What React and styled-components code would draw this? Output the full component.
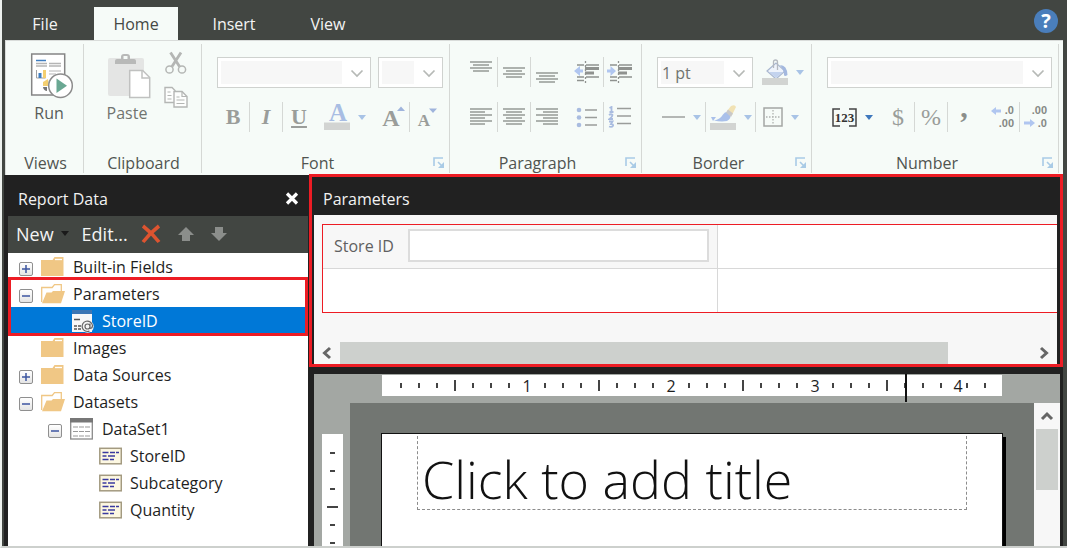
import React from "react";
import styled, { createGlobalStyle } from "styled-components";

const GlobalStyle = createGlobalStyle`
  *, *::before, *::after { box-sizing: border-box; }
  body {
    margin: 0;
    font-family: "Open Sans", "Noto Sans", sans-serif;
    font-size: 16px;
    line-height: 20px;
    color: #1e1e1e;
  }
  button, input, select { font: inherit; color: inherit; margin: 0; }
  ul { list-style: none; margin: 0; padding: 0; }
  h2, h1 { margin: 0; font-weight: 400; }
`;

const RED = "#ed1c24";
const LINE = "#d5d8d5";
const INK = "#9a9d9a";
const BLUE = "#a8bde3";

/* ---------- window frame ---------- */

const Frame = styled.div`
  min-height: 100vh;
  display: flex;
  flex-direction: column;
  background: #424642;
  border-left: 2px solid #eef2ef;
  border-bottom: 2px solid #cdd0cd;
`;

const TabBar = styled.nav`
  display: flex;
  height: 40px;
  padding: 7px 9px 0 0;
`;

const Tab = styled.button`
  width: ${(p) => p.$width}px;
  margin-left: ${(p) => (p.$active ? 6 : 0)}px;
  padding: 0;
  border: 0;
  background: ${(p) => (p.$active ? "#f6fbf8" : "transparent")};
  color: ${(p) => (p.$active ? "#444844" : "#f4f4f4")};
`;

const HelpButton = styled.button`
  width: 24px;
  height: 24px;
  margin: 2px 0 0 auto;
  padding: 0;
  border: 0;
  border-radius: 50%;
  background: #4a7ebb;
  color: #fff;
  font-size: 20px;
  font-weight: 700;
  line-height: 24px;
`;

const Ribbon = styled.div`
  display: flex;
  height: 135px;
  margin: 0 4px 0 3px;
  padding: 3px 4px 2px 0;
  background: #f6fbf8;
  border-top: 1px solid #d9dcda;
  border-left: 1px solid #d9dcda;
`;

const GroupBox = styled.section`
  display: flex;
  flex-direction: column;
  flex: ${(p) => (p.$grow ? "1 1 0" : "0 0 auto")};
  width: ${(p) => p.$width}px;
  min-width: 0;
  padding: 13px 6px 0 15px;
  border-right: 1px solid ${LINE};
`;

const GroupFooter = styled.div`
  display: flex;
  align-items: center;
  height: 20px;
  margin: auto ${(p) => (p.$launcher ? -2 : -8)}px 0 -15px;
`;

const GroupName = styled.h2`
  flex: 1;
  font-size: 16px;
  line-height: 20px;
  text-align: center;
  color: #505450;
`;

const ComboRow = styled.div`
  display: flex;
  gap: 7px;
  height: 30px;
`;

const ToolRow = styled.div`
  display: flex;
  height: 30px;
  margin-top: ${(p) => (p.$first ? 0 : 15)}px;
`;

const Tool = styled.button`
  display: flex;
  align-items: center;
  justify-content: center;
  gap: 8px;
  flex: none;
  width: ${(p) => p.$width || 33}px;
  height: 30px;
  padding: 0;
  border: 0;
  border-right: 1px solid ${(p) => (p.$divided ? LINE : "transparent")};
  margin-left: ${(p) => p.$before || 0}px;
  background: none;
  font-family: "Liberation Serif", serif;
  font-size: ${(p) => p.$size || 24}px;
  line-height: 30px;
  font-weight: ${(p) => (p.$plain ? 400 : 700)};
  font-style: ${(p) => (p.$italic ? "italic" : "normal")};
  text-decoration: ${(p) => (p.$underline ? "underline" : "none")};
  color: ${INK};
`;

const Glyph = styled.svg`
  display: block;
  flex: none;
`;

const BigTool = styled.button`
  display: flex;
  flex-direction: column;
  align-items: center;
  gap: 4px;
  width: 56px;
  margin-top: -4px;
  padding: 0;
  border: 0;
  background: none;
  color: ${(p) => (p.$dim ? "#707470" : "#585c58")};
`;

const ClipboardTools = styled.div`
  display: flex;
  gap: 9px;
`;

const SmallStack = styled.div`
  display: flex;
  flex-direction: column;
  gap: 11px;
  margin-top: -6px;
`;

const Launcher = styled.button`
  padding: 0;
  border: 0;
  background: none;
`;

const ComboShell = styled.div`
  position: relative;
  flex: ${(p) => (p.$width ? "0 0 auto" : "1 1 0")};
  width: ${(p) => p.$width}px;
  height: 31px;
  padding: 3px 28px 3px 3px;
  border: 1px solid #cfd2cf;
  background: #fff;
`;

const ComboSelect = styled.select`
  display: block;
  width: 100%;
  height: 100%;
  padding: 0 1px;
  border: 0;
  appearance: none;
  background: #f7f7f7;
  color: #707470;
  opacity: 1;
`;

const ComboArrow = styled.svg`
  position: absolute;
  right: 6px;
  top: 11px;
  pointer-events: none;
`;

/* ---------- workspace ---------- */

const Workspace = styled.div`
  flex: 1;
  display: flex;
  margin: 0 4px 0 2px;
  padding: 0 0 0 4px;
  background: #212121;
`;

const SidePanel = styled.aside`
  display: flex;
  flex-direction: column;
  flex: 0 0 300px;
`;

const PanelHeader = styled.header`
  display: flex;
  align-items: center;
  justify-content: space-between;
  height: 41px;
  padding: 6px 9px 0 10px;
  color: #f2f2f2;
`;

const PanelTitle = styled.h2`
  font-size: 16px;
  line-height: 20px;
`;

const IconButton = styled.button`
  display: block;
  padding: 0;
  border: 0;
  background: none;
`;

const PanelToolbar = styled.div`
  display: flex;
  align-items: center;
  height: 37px;
  padding: 0 8px 2px;
  background: #424642;
  color: #f4f4f4;
`;

const TextButton = styled.button`
  display: flex;
  align-items: center;
  gap: 7px;
  margin-right: 13px;
  padding: 0;
  border: 0;
  background: none;
  font-size: 18px;
  line-height: 24px;
`;

const ToolbarIcons = styled.div`
  display: flex;
  align-items: center;
  gap: 17px;
`;

const Tree = styled.ul`
  flex: 1;
  background: #fff;
`;

const TreeRow = styled.li`
  display: flex;
  align-items: center;
  gap: 8px;
  height: 27px;
  padding-left: ${(p) => 11 + p.$level * 29}px;
  background: ${(p) => (p.$selected ? "#0078d7" : "transparent")};
  color: ${(p) => (p.$selected ? "#fff" : "#1e1e1e")};
`;

const Expander = styled.button`
  flex: none;
  width: 14px;
  height: 14px;
  margin-top: 4px;
  padding: 0;
  border: 1px solid #8f8f8f;
  border-radius: 2px;
  background: linear-gradient(#fff, #e4e4e4);
`;

const ExpanderSpace = styled.span`
  flex: none;
  width: 14px;
`;

const Marked = styled.li`
  position: relative;
  &::after {
    content: "";
    position: absolute;
    inset: -3px 0 -2px;
    border: 3px solid ${RED};
    pointer-events: none;
  }
`;

const MainColumn = styled.main`
  flex: 1;
  min-width: 0;
  display: flex;
  flex-direction: column;
  margin-left: 1px;
`;

const ParameterPanel = styled.section`
  position: relative;
  display: flex;
  flex-direction: column;
  margin-top: -1px;
  padding-right: 3px;
  padding-left: 2px;
  border: 3px solid ${RED};
  background: #212121;
`;

const ParameterHeader = styled.header`
  height: 38px;
  padding: 12px 0 0 9px;
  color: #f2f2f2;
`;

const ParameterBody = styled.div`
  padding: 9px 0 0 8px;
  background: #f7f7f7;
`;

const ParameterGrid = styled.div`
  display: grid;
  grid-template-columns: 395px 1fr;
  grid-template-rows: 44px 43px;
  margin-bottom: 29px;
  border: 1px solid ${RED};
  border-right: 0;
`;

const Cell = styled.div`
  display: flex;
  align-items: center;
  gap: 14px;
  padding: 0 8px 2px 11px;
  background: ${(p) => (p.$filled ? "#f7f7f7" : "#fff")};
  border: 0 solid #d8d8d8;
  border-right-width: ${(p) => (p.$right ? 1 : 0)}px;
  border-bottom-width: ${(p) => (p.$bottom ? 1 : 0)}px;
  color: #606060;
`;

const ParameterInput = styled.input`
  flex: 1;
  min-width: 0;
  height: 33px;
  padding: 0 6px;
  border: 2px solid #dcdcdc;
  background: #fff;
`;

const HorizontalScroll = styled.div`
  display: flex;
  height: 22px;
  background: #f7f7f7;
`;

const ScrollButton = styled.button`
  display: flex;
  align-items: center;
  justify-content: center;
  flex: none;
  width: 26px;
  height: ${(p) => p.$height || 22}px;
  padding: 0;
  border: 0;
  background: #f7f7f7;
`;

const HorizontalTrack = styled.div`
  flex: 1;
`;

const HorizontalThumb = styled.div`
  width: 88%;
  height: 100%;
  background: #cdd0cd;
`;

const Designer = styled.section`
  flex: 1;
  display: grid;
  grid-template-columns: 36px 1fr;
  grid-template-rows: 29px 1fr;
  margin: 7px 3px 0 5px;
  background: #a3a7a3;
`;

const TopRuler = styled.div`
  position: relative;
  z-index: 1;
  grid-column: 2;
  display: flex;
  align-items: center;
  height: 21px;
  margin: 1px 58px 0 32px;
  padding-left: 10px;
  background: #fff;
`;

const TopMark = styled.span`
  flex: none;
  display: flex;
  justify-content: ${(p) => (p.$start ? "flex-start" : "center")};
  width: ${(p) => p.$width || 18}px;
`;

const TopTick = styled.span`
  width: 2px;
  height: ${(p) => (p.$long ? 11 : 5)}px;
  background: #444;
`;

const Cursor = styled.span`
  position: absolute;
  left: 523px;
  top: -1px;
  width: 2px;
  height: 28px;
  background: #111;
`;

const SideRulerArea = styled.div`
  display: flex;
  padding: 31px 7px 0 8px;
`;

const SideRuler = styled.div`
  flex: 1;
  display: flex;
  flex-direction: column;
  align-items: center;
  padding-top: 2px;
  background: #fff;
`;

const SideMark = styled.span`
  flex: none;
  display: flex;
  align-items: flex-end;
  height: 18px;
`;

const SideTick = styled.span`
  width: ${(p) => (p.$long ? 11 : 5)}px;
  height: 2px;
  background: #444;
`;

const CanvasArea = styled.div`
  display: flex;
  overflow: hidden;
  background: #727672;
`;

const Page = styled.div`
  flex: 1;
  min-width: 0;
  margin: 30px 31px 0;
  padding: 2px 35px 0;
  background: #fff;
  border: 1px solid #111;
  border-bottom: 0;
  box-shadow: 3px 4px 0 #000;
`;

const TitleBox = styled.div`
  height: 74px;
  padding: 15px 0 0 4px;
  border: 1px dashed #8c8c8c;
  border-top: 0;
`;

const ReportTitle = styled.h1`
  font-size: 52px;
  line-height: 56px;
  font-weight: 300;
  color: #111;
  white-space: nowrap;
`;

const VerticalScroll = styled.div`
  flex: 0 0 26px;
  background: #f7f7f7;
`;

const VerticalThumb = styled.div`
  height: 61px;
  margin: 0 2px;
  background: #cdd0cd;
`;

/* ---------- drawings ---------- */

const Chevron = ({ dir }) => {
  const d = {
    up: "M2 10l5-5 5 5",
    left: "M10 2L4.500 7l5.500 5",
    right: "M4 2l5.500 5L4 12",
  }[dir];
  return (
    <Glyph width="14" height="14" viewBox="0 0 14 14">
      <path d={d} fill="none" stroke="#666" strokeWidth="3" />
    </Glyph>
  );
};

const Caret = ({ color = "#a8c3e6" }) => (
  <Glyph width="8" height="5" viewBox="0 0 8 5">
    <path d="M0 0h8L4 5z" fill={color} />
  </Glyph>
);

const LaunchIcon = () => (
  <Glyph width="12" height="12" viewBox="0 0 12 12">
    <path d="M1 9V1h9M5 5l4 4" fill="none" stroke="#a9cbe6" strokeWidth="1.600" />
    <path d="M11 5v6H5z" fill="#a9cbe6" />
  </Glyph>
);

const RunIcon = () => (
  <Glyph width="50" height="46" viewBox="24 53 50 46">
    <path d="M31.700 54h33v41h-33z" fill="#fff" stroke="#858585" strokeWidth="1.500" />
    <path d="M36 60.500h10" stroke="#3e7dc0" strokeWidth="1.500" />
    <path d="M36 63.500h11M49 63.500h12M36 66h11M49 66h12" stroke="#b5b5b5" strokeWidth="1.300" />
    <path d="M36.500 70v8h9" fill="none" stroke="#a0a0a0" />
    <path d="M38.500 73h3v5h-3z" fill="#3e7dc0" />
    <path d="M43 70h3v8h-3z" fill="#f4cf70" />
    <path d="M49 71h12M49 74h7" stroke="#b5b5b5" strokeWidth="1.200" />
    <path d="M48 79l-5 3v4h6z" fill="#f4cf70" />
    <path d="M43 87h4v4c-2 0-4-2-4-4" fill="#777" />
    <circle cx="60.500" cy="85.700" r="11.800" fill="#fff" stroke="#8c8c8c" strokeWidth="1.500" />
    <path d="M56.500 78.500v14.500l10.500-7.300z" fill="#6aa893" />
  </Glyph>
);

const PasteIcon = () => (
  <Glyph width="48" height="46" viewBox="104 53 48 46">
    <rect x="109" y="58" width="36" height="38" rx="2" fill="#e4e5e4" />
    <path d="M116 64v-3q0-2 2-2h4v-2q0-3 3-3h3q3 0 3 3v2h4q2 0 2 2v3z" fill="#b8b9b8" />
    <rect x="124.500" y="56" width="4" height="3" fill="#f6fbf8" />
    <path d="M130.700 70.500h13l7 7v20h-20z" fill="#fff" stroke="#c0c1c0" strokeWidth="1.500" />
    <path d="M143 71v7h7" fill="none" stroke="#c0c1c0" strokeWidth="1.500" />
  </Glyph>
);

const ScissorsIcon = () => (
  <Glyph width="24" height="24" viewBox="165 50 24 24">
    <g fill="none" stroke="#b4b6b4">
      <path d="M171.500 51.500l9 14M182 51.500l-9 14" strokeWidth="2.800" />
      <circle cx="170.500" cy="68.500" r="3.600" strokeWidth="1.500" />
      <circle cx="183" cy="68.500" r="3.600" strokeWidth="1.500" />
    </g>
  </Glyph>
);

const CopyIcon = () => (
  <Glyph width="24" height="23" viewBox="164 86 24 23">
    <g fill="#fdfefd" stroke="#b4b6b4" strokeWidth="1.400">
      <path d="M165 87.500h7l3 3v12h-10z" />
      <path d="M174 91.500h8l5 5v10.500h-13z" />
      <path d="M182 91.500v5h5M167.500 92h3M167.500 95.500h4M167.500 99h4M176.500 97h3M176.500 100h8M176.500 103.500h8" fill="none" strokeWidth="1.200" />
    </g>
  </Glyph>
);

/* Stack of text lines: each entry is [y, x1, x2]. */
const LinesIcon = ({ lines }) => (
  <Glyph width="22" height="22" viewBox="0 0 22 22">
    {lines.map(([y, a, b], i) => (
      <path key={i} d={`M${a} ${y}H${b}`} stroke="#8f928f" strokeWidth="1.400" />
    ))}
  </Glyph>
);

const centred = (top, n) =>
  Array.from({ length: n }, (_, i) => (i % 2 ? [top + i * 3, 3, 19] : [top + i * 3, 0, 22]));

const alignTop = centred(1, 4);
const alignMiddle = centred(7, 4);
const alignBottom = centred(12, 4);
const textLeft = [0, 1, 2, 3, 4, 5].map((i) => [3 + i * 3, 0, i % 2 ? 15 : 22]);
const textCenter = [0, 1, 2, 3, 4, 5].map((i) => [3 + i * 3, i % 2 ? 3 : 0, i % 2 ? 19 : 22]);
const textRight = [0, 1, 2, 3, 4, 5].map((i) => [3 + i * 3, i % 2 ? 7 : 0, 22]);

const IndentIcon = ({ out }) => (
  <Glyph width="26" height="24" viewBox="0 0 26 24">
    <path d="M3 5h7M12 5h13M3 17h7M12 17h13M3 20.500h7" stroke="#8f928f" strokeWidth="1.400" />
    <path d="M11 8.500h14M11 13h9" stroke="#8f928f" strokeWidth="3" />
    <path d="M11.500 1v22" stroke="#8f928f" strokeWidth="1.300" strokeDasharray="2 2" />
    <path
      d={out ? "M0 11l6-5v3.500h3v3H6V16z" : "M9 11L3.500 6v3.500H0v3h3.500V16z"}
      fill="#b0c6f0"
    />
  </Glyph>
);

const BulletIcon = () => (
  <Glyph width="22" height="22" viewBox="0 0 22 22">
    <g fill="#a9bce0">
      <circle cx="3" cy="4" r="2.300" />
      <circle cx="3" cy="11.500" r="2.300" />
      <circle cx="3" cy="19" r="2.300" />
    </g>
    <path d="M9 4h12M9 11.500h12M9 19h12" stroke="#9a9d9a" strokeWidth="1.500" />
  </Glyph>
);

const NumberedIcon = () => (
  <Glyph width="24" height="22" viewBox="0 0 24 22">
    <g fill="none" stroke="#a9bce0" strokeWidth="1.800">
      <path d="M1.500 2L3.500 1v5M1.500 6h4" />
      <path d="M1 9q2-1.500 3.500 0 0 2-3 4H5" />
      <path d="M1 15.500h3.500L3 18q2.500 0 2 1.700-1 1.800-4 .8" />
    </g>
    <path d="M9 2.500h14M9 10h14M9 17.500h14" stroke="#9a9d9a" strokeWidth="1.500" />
  </Glyph>
);

const FontColorIcon = () => (
  <Glyph width="26" height="38" viewBox="0 -6 26 38">
    <text x="14" y="17" textAnchor="middle" fontFamily="Liberation Serif, serif" fontSize="25" fontWeight="700" fill={BLUE}>
      A
    </text>
    <path d="M0 18.500h26v7.500H0z" fill="#d2d4d2" />
  </Glyph>
);

const FontStepIcon = ({ shrink }) => (
  <Glyph width="26" height="36" viewBox="0 -5 26 36">
    <text x="11" y="22" textAnchor="middle" fontFamily="Liberation Serif, serif" fontSize={shrink ? 17 : 24} fontWeight="700" fill={INK}>
      A
    </text>
    <path d={shrink ? "M16 4.500h8l-4 4.500z" : "M17 7h8l-4-4.500z"} fill="#9fb4dc" />
  </Glyph>
);

const CommaIcon = () => (
  <Glyph width="12" height="60" viewBox="0 -12 12 60">
    <text x="6" y="18" textAnchor="middle" fontFamily="Liberation Serif, serif" fontSize="30" fontWeight="700" fill="#8b8e8b">
      ,
    </text>
  </Glyph>
);

const FillIcon = () => (
  <Glyph width="26" height="27" viewBox="0 0 26 27">
    <path d="M5 12L14 4l9 8-9 8z" fill="#eef3fb" stroke="#a9b7cf" strokeWidth="1.200" />
    <path d="M7 13h14l-7 6z" fill="#c3d3ee" />
    <path d="M11.500 9V3q0-2 2-2t2 2v8" fill="none" stroke="#b4b8bf" strokeWidth="1.300" />
    <path d="M18 6q7 0 7.500 10-3 2-3.500 0 0-5-4-10" fill="#a3b8df" />
    <path d="M0 19h26v7H0z" fill="#d2d4d2" />
  </Glyph>
);

const BrushIcon = () => (
  <Glyph width="26" height="27" viewBox="0 0 26 27">
    <path d="M1 13h5l-3 4zM4 16.500q6-1 9-6 3-4 7-1.500 2 5-3 8-6 1-13-.5" fill="#a9c0ea" />
    <path d="M17 7l4-5q4-2 5 1l-4 8z" fill="#f1e2b4" />
    <path d="M16 8.500l2-3 5 4-2 3.500z" fill="#c9c9c9" />
    <path d="M0 19h26v7H0z" fill="#d2d4d2" />
  </Glyph>
);

const BordersIcon = () => (
  <Glyph width="20" height="20" viewBox="0 0 20 20">
    <rect x="1" y="1" width="18" height="18" fill="none" stroke="#a4a7a4" strokeWidth="1.500" />
    <path d="M10 3v14M3 10h14" stroke="#b0b3b0" strokeWidth="1.300" strokeDasharray="1.500 1.500" />
  </Glyph>
);

const LineStyleIcon = () => (
  <Glyph width="23" height="4" viewBox="0 0 23 4">
    <path d="M0 2h23" stroke="#a4a7a4" strokeWidth="1.600" />
  </Glyph>
);

const PlaceholderIcon = () => (
  <Glyph width="25" height="19" viewBox="0 0 25 19">
    <path d="M8 1H1v17h7M17 1h7v17h-7" fill="none" stroke="#444" strokeWidth="1.500" />
    <text x="12.500" y="14" textAnchor="middle" fontFamily="Liberation Serif, serif" fontSize="13" fontWeight="700" fill="#333">
      123
    </text>
  </Glyph>
);

const DecimalIcon = ({ less }) => (
  <Glyph width="24" height="30" viewBox="0 -4 24 30">
    <g fontFamily="Liberation Sans, sans-serif" fontSize="11" fill="#858885" textAnchor="end">
      <text x="23" y="8">{less ? ".00" : ".0"}</text>
      <text x="23" y="21">{less ? ".0" : ".00"}</text>
    </g>
    <path
      d={less ? "M11 17L6 13v2.500H0v3h6V21z" : "M0 5l5-4v2.500h5v3H5V9z"}
      fill="#b0c6f0"
    />
  </Glyph>
);

const CloseIcon = () => (
  <Glyph width="14" height="13" viewBox="0 0 14 13">
    <path d="M2 1.500l10 10M12 1.500l-10 10" stroke="#fff" strokeWidth="3.200" />
  </Glyph>
);

const DeleteIcon = () => (
  <Glyph width="20" height="20" viewBox="0 0 20 20">
    <path d="M2 2q9 7 16 16M18 2Q9 9 2 18" fill="none" stroke="#dd5430" strokeWidth="3.600" />
  </Glyph>
);

const ArrowIcon = ({ down }) => (
  <Glyph width="16" height="16" viewBox="0 0 16 16">
    <path d={down ? "M8 15l8-8h-4V1H4v6H0z" : "M8 1l8 8h-4v6H4V9H0z"} fill="#8b8e8b" />
  </Glyph>
);

const FolderIcon = () => (
  <Glyph width="24" height="20" viewBox="0 0 24 20">
    <path d="M0 3h11.500l2-3H22.500v19H0z" fill="#f0c785" />
    <path d="M14 2.500h7" stroke="#fff" strokeWidth="1.300" />
  </Glyph>
);

const OpenFolderIcon = () => (
  <Glyph width="24" height="20" viewBox="0 0 24 20">
    <path d="M.700 18V3.500h10.500l2.300-2.800h6.800V7" fill="#fff" stroke="#f0c785" strokeWidth="1.300" />
    <path d="M5.500 8.500h5l1.500-1.500h12l-4 12.300H1z" fill="#f0c785" />
  </Glyph>
);

const ParameterIcon = () => (
  <Glyph width="24" height="24" viewBox="-2 0 24 24">
    <path d="M0 1h20v22H0z" fill="#f8f8f8" />
    <path d="M0 1h20v4H0z" fill="#3c76b4" />
    <path d="M2 10.500h6M2 17h3M6 17h3M2 20h3M6 20h3" stroke="#555" strokeWidth="1.500" />
    <circle cx="15.500" cy="17.500" r="6.200" fill="#f4f4f4" />
    <path d="M18 14.500v5q2.500 0 2.500-3a5.200 5.200 0 1 0-3 5.500M18 17.500a2.500 2.500 0 1 1-5 0 2.500 2.500 0 0 1 5 0" fill="none" stroke="#666" strokeWidth="1.200" />
  </Glyph>
);

const TableIcon = () => (
  <Glyph width="24" height="22" viewBox="0 0 24 22">
    <rect x=".7" y="1" width="21.600" height="20" fill="#fff" stroke="#8a8a8a" strokeWidth="1.300" />
    <path d="M0 0h23v4.500H0z" fill="#777" />
    <path d="M3 9h17M3 13.500h17M3 18h17" stroke="#999" strokeWidth="1.200" strokeDasharray="5 1" />
  </Glyph>
);

const FieldIcon = () => (
  <Glyph width="23" height="18" viewBox="0 0 23 18">
    <rect x=".8" y="1.300" width="21.500" height="15.500" fill="#fdf8e2" stroke="#a39a80" strokeWidth="1.500" />
    <path d="M3.500 5.500h6M11 5.500h5M17 5.500h3M3.500 9h4M9 9h7M3.500 12.500h6M11 12.500h4" stroke="#3a3aa0" strokeWidth="1.600" />
  </Glyph>
);

/* ---------- composed parts ---------- */

const Combo = ({ label, value = "", ...rest }) => (
  <ComboShell {...rest}>
    <ComboSelect aria-label={label} disabled defaultValue={value}>
      <option value={value}>{value}</option>
    </ComboSelect>
    <ComboArrow width="14" height="9" viewBox="0 0 14 9">
      <path d="M1.500 1.500L7 7l5.500-5.500" fill="none" stroke="#b6b9b6" strokeWidth="1.700" />
    </ComboArrow>
  </ComboShell>
);

const Group = ({ name, launcher, children, ...rest }) => (
  <GroupBox aria-label={name} {...rest}>
    {children}
    <GroupFooter $launcher={launcher}>
      <GroupName>{name}</GroupName>
      {launcher && (
        <Launcher aria-label={`${name} options`}>
          <LaunchIcon />
        </Launcher>
      )}
    </GroupFooter>
  </GroupBox>
);

const TreeItem = ({ state, icon, label, level = 0, selected }) => (
  <TreeRow $level={level} $selected={selected}>
    {state ? (
      <Expander aria-label={state === "open" ? `Collapse ${label}` : `Expand ${label}`}>
        <Glyph width="12" height="12" viewBox="0 0 12 12">
          <path d={state === "open" ? "M2 6h8" : "M2 6h8M6 2v8"} stroke="#3c55a0" strokeWidth="1.500" />
        </Glyph>
      </Expander>
    ) : (
      <ExpanderSpace />
    )}
    {icon}
    {label}
  </TreeRow>
);

const tabs = [
  { name: "File", width: 86 },
  { name: "Home", width: 84, active: true },
  { name: "Insert", width: 112 },
  { name: "View", width: 76 },
];

const topMarks = [1, 2, 3].flatMap((n) => ["", "", "", "long", "", "", "", String(n)]);
const lastMarks = ["", "", "", "long", "", "", ""];
const sideMarks = [false, false, false, true, false, false];

export default function App() {
  return (
    <>
      <GlobalStyle />
      <Frame>
        <TabBar aria-label="Ribbon tabs">
          {tabs.map((t) => (
            <Tab key={t.name} $width={t.width} $active={t.active}>
              {t.name}
            </Tab>
          ))}
          <HelpButton aria-label="Help">?</HelpButton>
        </TabBar>

        <Ribbon>
          <Group name="Views" $width={78}>
            <BigTool>
              <RunIcon />
              Run
            </BigTool>
          </Group>

          <Group name="Clipboard" $width={118}>
            <ClipboardTools>
              <BigTool $dim>
                <PasteIcon />
                Paste
              </BigTool>
              <SmallStack>
                <IconButton aria-label="Cut"><ScissorsIcon /></IconButton>
                <IconButton aria-label="Copy"><CopyIcon /></IconButton>
              </SmallStack>
            </ClipboardTools>
          </Group>

          <Group name="Font" launcher $width={248}>
            <ComboRow>
              <Combo label="Font family" $width={154} />
              <Combo label="Font size" />
            </ComboRow>
            <ToolRow>
              <Tool $divided aria-label="Bold" $size={22}>B</Tool>
              <Tool $divided $italic aria-label="Italic" $size={22}>I</Tool>
              <Tool $underline aria-label="Underline" $size={22}>U</Tool>
              <Tool $width={58} aria-label="Font color">
                <FontColorIcon />
                <Caret />
              </Tool>
              <Tool $divided $before={3} aria-label="Grow font"><FontStepIcon /></Tool>
              <Tool aria-label="Shrink font"><FontStepIcon shrink /></Tool>
            </ToolRow>
          </Group>

          <Group name="Paragraph" launcher $width={192}>
            <ToolRow $first>
              <Tool $divided aria-label="Align top"><LinesIcon lines={alignTop} /></Tool>
              <Tool $divided aria-label="Align middle"><LinesIcon lines={alignMiddle} /></Tool>
              <Tool aria-label="Align bottom"><LinesIcon lines={alignBottom} /></Tool>
              <Tool $divided $before={7} aria-label="Decrease indent"><IndentIcon out /></Tool>
              <Tool aria-label="Increase indent"><IndentIcon /></Tool>
            </ToolRow>
            <ToolRow>
              <Tool $divided aria-label="Align left"><LinesIcon lines={textLeft} /></Tool>
              <Tool $divided aria-label="Center"><LinesIcon lines={textCenter} /></Tool>
              <Tool aria-label="Align right"><LinesIcon lines={textRight} /></Tool>
              <Tool $divided $before={7} aria-label="Bullets"><BulletIcon /></Tool>
              <Tool aria-label="Numbering"><NumberedIcon /></Tool>
            </ToolRow>
          </Group>

          <Group name="Border" launcher $width={170}>
            <ComboRow>
              <Combo label="Border width" value="1 pt" $width={96} />
              <Tool $width={46} aria-label="Fill color">
                <FillIcon />
                <Caret />
              </Tool>
            </ComboRow>
            <ToolRow>
              <Tool $divided $width={49} aria-label="Border style">
                <LineStyleIcon />
                <Caret />
              </Tool>
              <Tool $divided $width={50} aria-label="Border color">
                <BrushIcon />
                <Caret />
              </Tool>
              <Tool $width={50} aria-label="Borders">
                <BordersIcon />
                <Caret />
              </Tool>
            </ToolRow>
          </Group>

          <Group name="Number" launcher $grow>
            <ComboRow>
              <Combo label="Number format" />
            </ComboRow>
            <ToolRow>
              <Tool $width={52} aria-label="Placeholder style">
                <PlaceholderIcon />
                <Caret color="#3f78bd" />
              </Tool>
              <Tool $divided $before={3} $plain aria-label="Currency">$</Tool>
              <Tool $divided $plain aria-label="Percent">%</Tool>
              <Tool aria-label="Thousands separator"><CommaIcon /></Tool>
              <Tool $divided $before={6} aria-label="Increase decimals"><DecimalIcon /></Tool>
              <Tool aria-label="Decrease decimals"><DecimalIcon less /></Tool>
            </ToolRow>
          </Group>
        </Ribbon>

        <Workspace>
          <SidePanel>
            <PanelHeader>
              <PanelTitle>Report Data</PanelTitle>
              <IconButton aria-label="Close"><CloseIcon /></IconButton>
            </PanelHeader>
            <PanelToolbar>
              <TextButton>
                New
                <Caret color="#1a1a1a" />
              </TextButton>
              <TextButton>Edit...</TextButton>
              <ToolbarIcons>
                <IconButton aria-label="Delete"><DeleteIcon /></IconButton>
                <IconButton aria-label="Move up"><ArrowIcon /></IconButton>
                <IconButton aria-label="Move down"><ArrowIcon down /></IconButton>
              </ToolbarIcons>
            </PanelToolbar>
            <Tree>
              <TreeItem state="closed" icon={<FolderIcon />} label="Built-in Fields" />
              <Marked>
                <ul>
                  <TreeItem state="open" icon={<OpenFolderIcon />} label="Parameters" />
                  <TreeItem level={1} selected icon={<ParameterIcon />} label="StoreID" />
                </ul>
              </Marked>
              <TreeItem icon={<FolderIcon />} label="Images" />
              <TreeItem state="closed" icon={<FolderIcon />} label="Data Sources" />
              <TreeItem state="open" icon={<OpenFolderIcon />} label="Datasets" />
              <TreeItem level={1} state="open" icon={<TableIcon />} label="DataSet1" />
              <TreeItem level={2} icon={<FieldIcon />} label="StoreID" />
              <TreeItem level={2} icon={<FieldIcon />} label="Subcategory" />
              <TreeItem level={2} icon={<FieldIcon />} label="Quantity" />
            </Tree>
          </SidePanel>

          <MainColumn>
            <ParameterPanel>
              <ParameterHeader>
                <PanelTitle>Parameters</PanelTitle>
              </ParameterHeader>
              <ParameterBody>
                <ParameterGrid>
                  <Cell $filled $right $bottom>
                    <label htmlFor="store-id">Store ID</label>
                    <ParameterInput id="store-id" type="text" />
                  </Cell>
                  <Cell $bottom />
                  <Cell $right />
                  <Cell />
                </ParameterGrid>
              </ParameterBody>
              <HorizontalScroll>
                <ScrollButton aria-label="Scroll left"><Chevron dir="left" /></ScrollButton>
                <HorizontalTrack>
                  <HorizontalThumb />
                </HorizontalTrack>
                <ScrollButton aria-label="Scroll right"><Chevron dir="right" /></ScrollButton>
              </HorizontalScroll>
            </ParameterPanel>

            <Designer>
              <TopRuler>
                {topMarks.map((m, i) => (
                  <TopMark key={i}>{m && m !== "long" ? m : <TopTick $long={m === "long"} />}</TopMark>
                ))}
                {lastMarks.map((m, i) => (
                  <TopMark key={i}><TopTick $long={m === "long"} /></TopMark>
                ))}
                <TopMark $width={16}>4</TopMark>
                <TopMark $start><TopTick /></TopMark>
                <TopMark $start><TopTick /></TopMark>
                <Cursor />
              </TopRuler>
              <SideRulerArea>
                <SideRuler>
                  {sideMarks.map((long, i) => (
                    <SideMark key={i}><SideTick $long={long} /></SideMark>
                  ))}
                </SideRuler>
              </SideRulerArea>
              <CanvasArea>
                <Page>
                  <TitleBox>
                    <ReportTitle>Click to add title</ReportTitle>
                  </TitleBox>
                </Page>
                <VerticalScroll>
                  <ScrollButton $height={26} aria-label="Scroll up"><Chevron dir="up" /></ScrollButton>
                  <VerticalThumb />
                </VerticalScroll>
              </CanvasArea>
            </Designer>
          </MainColumn>
        </Workspace>
      </Frame>
    </>
  );
}
